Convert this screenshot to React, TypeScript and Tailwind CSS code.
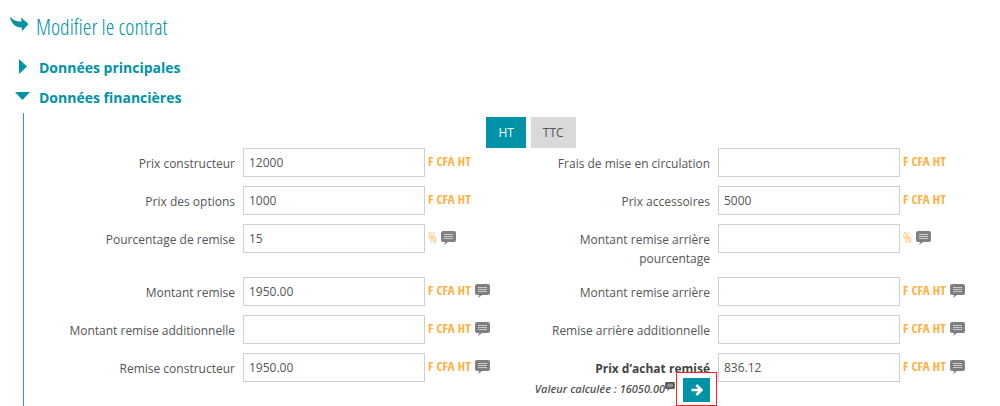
import { useState } from 'react';

interface Field {
  id: string;
  label: string;
  value: string;
  unit: string;
  comment?: boolean;
  computed?: string;
}

const leftFields: Field[] = [
  { id: 'prix-constructeur', label: 'Prix constructeur', value: '12000', unit: 'F CFA HT' },
  { id: 'prix-options', label: 'Prix des options', value: '1000', unit: 'F CFA HT' },
  { id: 'pourcentage-remise', label: 'Pourcentage de remise', value: '15', unit: '%', comment: true },
  { id: 'montant-remise', label: 'Montant remise', value: '1950.00', unit: 'F CFA HT', comment: true },
  { id: 'remise-additionnelle', label: 'Montant remise additionnelle', value: '', unit: 'F CFA HT', comment: true },
  { id: 'remise-constructeur', label: 'Remise constructeur', value: '1950.00', unit: 'F CFA HT', comment: true },
];

const rightFields: Field[] = [
  { id: 'frais-circulation', label: 'Frais de mise en circulation', value: '', unit: 'F CFA HT' },
  { id: 'prix-accessoires', label: 'Prix accessoires', value: '5000', unit: 'F CFA HT' },
  { id: 'remise-arriere-pct', label: 'Montant remise arrière pourcentage', value: '', unit: '%', comment: true },
  { id: 'remise-arriere', label: 'Montant remise arrière', value: '', unit: 'F CFA HT', comment: true },
  { id: 'arriere-additionnelle', label: 'Remise arrière additionnelle', value: '', unit: 'F CFA HT', comment: true },
  { id: 'prix-achat', label: 'Prix d’achat remisé', value: '836.12', unit: 'F CFA HT', comment: true, computed: '16050.00' },
];

function CommentIcon({ className }: { className: string }) {
  return (
    <svg className={className} viewBox="0 0 15 14" aria-hidden="true">
      <path
        d="M2 0h11a2 2 0 0 1 2 2v7a2 2 0 0 1-2 2H7L3 14l1.200-3H2a2 2 0 0 1-2-2V2a2 2 0 0 1 2-2z"
        fill="currentColor"
      />
      <path d="M3 3.500h9M3 5.500h9M3 7.500h9" stroke="#d0d0d0" strokeWidth="0.900" />
    </svg>
  );
}

function FieldRow({ field }: { field: Field }) {
  const [value, setValue] = useState(field.value);

  return (
    <div className="flex items-start">
      <div className="min-w-0 flex-1 pt-1.5 pr-2 pl-10 text-right">
        <label
          htmlFor={field.id}
          className={`block leading-[19px] ${field.computed ? 'font-bold text-[#444]' : ''}`}
        >
          {field.label}
        </label>
        {field.computed && (
          <div className="-ml-10 flex justify-end">
            <span className="pt-[3px] text-[11px] leading-4 font-semibold whitespace-nowrap italic">
              Valeur calculée : {field.computed}
            </span>
            <CommentIcon className="mt-1 mr-2 h-[9px] w-[10px] shrink-0 text-[#555]" />
            <div className="relative">
              <button
                type="button"
                aria-label="Appliquer la valeur calculée"
                className="flex h-6 w-[27px] items-center justify-center bg-[#0092a6] text-white"
              >
                <svg className="h-3 w-3" viewBox="0 0 12 12" aria-hidden="true">
                  <path d="M0.500 6H10M5.300 1L10.300 6l-5 5" fill="none" stroke="currentColor" strokeWidth="2.600" />
                </svg>
              </button>
              <span className="pointer-events-none absolute -inset-x-[7px] -top-1.5 -bottom-1 border border-[#f22]" />
            </div>
          </div>
        )}
      </div>
      <input
        id={field.id}
        type="text"
        value={value}
        onChange={(e) => setValue(e.target.value)}
        className="h-[29px] w-[182px] border border-[#cfcfcf] bg-white px-[5px] text-[#555] outline-none focus:border-[#0092a6]"
      />
      <div className="flex w-[74px] items-start gap-1 pl-[3px]">
        <span
          className={`leading-[26px] whitespace-nowrap text-[#ffb040] ${
            field.unit === '%'
              ? "font-['Open_Sans_Condensed_Light',sans-serif] text-[15px] text-[#ffa020]"
              : "font-['Open_Sans_Condensed',sans-serif] text-[13px]"
          }`}
        >
          {field.unit}
        </span>
        {field.comment && <CommentIcon className="mt-[7px] h-[14px] w-[15px] shrink-0 text-[#808080]" />}
      </div>
    </div>
  );
}

export default function App() {
  const [mode, setMode] = useState<'HT' | 'TTC'>('HT');
  const [openMain, setOpenMain] = useState(false);
  const [openFinance, setOpenFinance] = useState(true);

  const modeClass = (m: 'HT' | 'TTC') =>
    mode === m ? 'bg-[#0092a6] text-white' : 'bg-[#d9d9d9] text-[#555]';

  return (
    <main className="overflow-hidden bg-white font-['Open_Sans',sans-serif] text-[12px] text-[#555]">
      <h1 className="flex items-center gap-[7px] pt-[10px] pl-[10px] font-['Open_Sans_Condensed_Light',sans-serif] text-[22px] leading-8 text-[#0092a6]">
        <svg className="-mt-1 h-4 w-[19px]" viewBox="0 0 19 16" aria-hidden="true">
          <path d="M0 0.500C2.500 3.800 6 5.800 11.500 5.500L11 1.500L18.500 8L12 15.200L11.800 11.500C6 12 1 7.500 0 0.500z" fill="currentColor" />
        </svg>
        Modifier le contrat
      </h1>

      <h2 className="mt-[11px] text-[14px] leading-[30px] font-bold text-[#0092a6]">
        <button type="button" className="flex items-center pl-[15px]" onClick={() => setOpenMain(!openMain)} aria-expanded={openMain}>
          <span className="flex w-6 pl-1">
            <svg className="mb-1 h-[15px] w-2" viewBox="0 0 8 15" aria-hidden="true">
              <path d="M0 0l8 7.500L0 15z" fill="currentColor" />
            </svg>
          </span>
          Données principales
        </button>
      </h2>
      <h2 className="text-[14px] leading-[30px] font-bold text-[#0092a6]">
        <button type="button" className="flex items-center pl-[15px]" onClick={() => setOpenFinance(!openFinance)} aria-expanded={openFinance}>
          <span className="flex w-6">
            <svg className="mb-1 h-2 w-[15px]" viewBox="0 0 15 8" aria-hidden="true">
              <path d="M0 0h15L7.500 8z" fill="currentColor" />
            </svg>
          </span>
          Données financières
        </button>
      </h2>

      {openFinance && (
        <section className="ml-[23px] border-l border-l-[#2a9fb1] pt-1 pr-[26px] pb-[5px]">
          <div className="flex justify-center gap-[5px] pl-16">
            <button type="button" className={`h-[31px] px-3 ${modeClass('HT')}`} onClick={() => setMode('HT')}>
              HT
            </button>
            <button type="button" className={`h-[31px] px-3 ${modeClass('TTC')}`} onClick={() => setMode('TTC')}>
              TTC
            </button>
          </div>
          <div className="grid grid-cols-2 gap-y-[9px]">
            {leftFields.map((field, i) => [
              <FieldRow key={field.id} field={field} />,
              <FieldRow key={rightFields[i].id} field={rightFields[i]} />,
            ])}
          </div>
        </section>
      )}
    </main>
  );
}
